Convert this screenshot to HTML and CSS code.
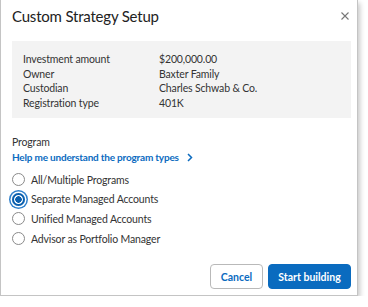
FILE: index.html
```html
<!DOCTYPE html>
<html lang="en">
<head>
  <meta charset="UTF-8">
  <title>Custom Strategy Setup</title>
  <link rel="stylesheet" href="styles.css">
</head>
<body>
  <div class="dialog">
    <div class="dialog-header">
      <h2 class="dialog-title">Custom Strategy Setup</h2>
      <button class="close-btn" aria-label="Close">
        <svg width="8" height="8" viewBox="0 0 8 8"><path d="M0.5 0.5 L7.5 7.5 M7.5 0.5 L0.5 7.5" stroke="#777" stroke-width="1.1" fill="none"/></svg>
      </button>
    </div>
    <div class="summary">
      <div class="summary-row"><span class="summary-label">Investment amount</span><span>$200,000.00</span></div>
      <div class="summary-row"><span class="summary-label">Owner</span><span>Baxter Family</span></div>
      <div class="summary-row"><span class="summary-label">Custodian</span><span>Charles Schwab &amp; Co.</span></div>
      <div class="summary-row"><span class="summary-label">Registration type</span><span>401K</span></div>
    </div>
    <div class="program">
      <div class="program-label">Program</div>
      <a class="help-link" href="#">Help me understand the program types
        <svg width="6" height="9" viewBox="0 0 6 9"><path d="M1 1 L4.5 4.5 L1 8" stroke="#0b6bbf" stroke-width="1.5" fill="none"/></svg>
      </a>
      <label class="radio"><span class="radio-circle"></span>All/Multiple Programs</label>
      <label class="radio selected"><span class="radio-circle"></span>Separate Managed Accounts</label>
      <label class="radio"><span class="radio-circle"></span>Unified Managed Accounts</label>
      <label class="radio"><span class="radio-circle"></span>Advisor as Portfolio Manager</label>
    </div>
    <div class="dialog-footer">
      <button class="btn btn-secondary">Cancel</button>
      <button class="btn btn-primary">Start building</button>
    </div>
  </div>
</body>
</html>
```

FILE: styles.css
```css
body {
  margin: 0;
  background: #fff;
  font-family: 'Lato', sans-serif;
  color: #333;
}
.dialog {
  width: 358px;
  height: 296px;
  box-sizing: border-box;
  border: 1px solid #c4c4c4;
  border-top: none;
  background: #fff;
  box-shadow: 2px 3px 5px rgba(0, 0, 0, 0.22);
  padding: 0 6px 0 11px;
  display: flex;
  flex-direction: column;
}
.dialog-header {
  display: flex;
  justify-content: space-between;
  align-items: flex-start;
  height: 41px;
}
.dialog-title {
  margin: 0;
  padding-top: 5px;
  font-size: 15px;
  line-height: 22px;
  letter-spacing: -0.2px;
  font-weight: 400;
  color: #222;
}
.close-btn {
  border: none;
  background: none;
  padding: 0;
  margin: 12px 2px 0 0;
  width: 8px;
  height: 8px;
  display: flex;
}
.summary {
  background: #f3f3f3;
  padding: 11px 11px 9px 11px;
  font-size: 10.5px;
  line-height: 14.5px;
  letter-spacing: -0.15px;
  color: #333;
  height: 77px;
  box-sizing: border-box;
}
.summary-row {
  display: flex;
}
.summary-label {
  width: 136px;
}
.program {
  padding-top: 17px;
  display: flex;
  flex-direction: column;
  font-size: 10.5px;
  letter-spacing: -0.15px;
}
.program-label {
  line-height: 15px;
  color: #333;
}
.help-link {
  line-height: 15px;
  margin-bottom: 5px;
  font-size: 10px;
  letter-spacing: -0.2px;
  color: #0b6bbf;
  font-weight: 700;
  text-decoration: none;
  display: flex;
  align-items: center;
  gap: 8px;
}
.radio {
  display: flex;
  align-items: center;
  gap: 6px;
  height: 19.6px;
  color: #333;
}
.radio-circle {
  width: 13px;
  height: 13px;
  box-sizing: border-box;
  border: 1px solid #8a8a8a;
  border-radius: 50%;
  background: #fff;
}
.radio.selected .radio-circle {
  border: 2px solid #0a5fae;
  background: radial-gradient(circle, #0a5fae 0 3px, #fff 3.5px);
  box-shadow: 0 0 0 1.5px #fff, 0 0 0 3px #2f80cc;
}
.dialog-footer {
  margin-top: auto;
  margin-bottom: 6px;
  display: flex;
  justify-content: flex-end;
  gap: 5px;
}
.btn {
  height: 25px;
  border-radius: 4px;
  font-family: 'Lato', sans-serif;
  font-size: 10.5px;
  font-weight: 700;
  padding: 0;
  cursor: pointer;
}
.btn-secondary {
  width: 53px;
  background: #fff;
  color: #0b6bbf;
  border: 1px solid #b9b9b9;
}
.btn-primary {
  width: 83px;
  background: #0a6bbf;
  color: #fff;
  border: 1px solid #0a6bbf;
}
```
